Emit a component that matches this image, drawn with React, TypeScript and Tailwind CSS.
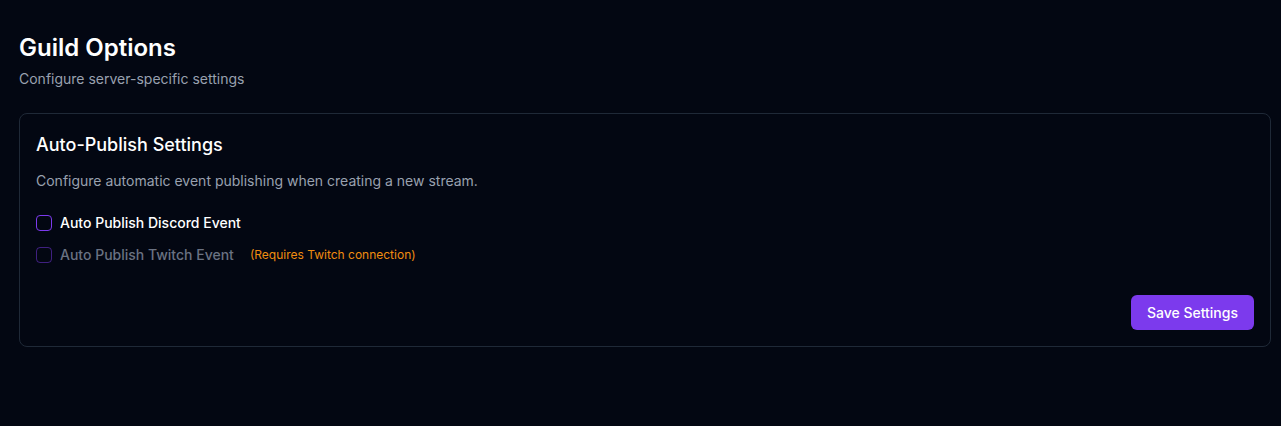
import { useState } from "react";

export default function App() {
  const [discord, setDiscord] = useState(false);

  return (
    <div
      className="min-h-[426px] bg-[#030712] pl-[19px] pr-[10px] pt-8 text-white"
      style={{ fontFamily: "Inter, 'Noto Sans', sans-serif" }}
    >
      <h1 className="text-2xl font-semibold leading-8 text-white">Guild Options</h1>
      <p className="mt-[5px] text-sm leading-5 text-gray-400">
        Configure server-specific settings
      </p>

      <div className="mt-[24px] rounded-lg border border-[#1f2937] px-4 pt-4 pb-4">
        <h2 className="mt-px text-lg font-medium leading-7 text-white">
          Auto-Publish Settings
        </h2>
        <p className="mt-3 text-sm leading-5 text-gray-400">
          Configure automatic event publishing when creating a new stream.
        </p>

        <div className="mt-[22px] flex flex-col gap-3">
          <label className="flex h-5 items-center gap-2 cursor-pointer">
            <input
              type="checkbox"
              checked={discord}
              onChange={(e) => setDiscord(e.target.checked)}
              className="h-4 w-4 appearance-none rounded border border-[#7c3aed] bg-transparent checked:bg-[#7c3aed]"
            />
            <span className="text-sm font-medium text-white">
              Auto Publish Discord Event
            </span>
          </label>
          <label className="flex h-5 items-center gap-2 cursor-not-allowed">
            <input
              type="checkbox"
              disabled
              className="h-4 w-4 appearance-none rounded border border-[#7c3aed]/50 bg-transparent"
            />
            <span className="text-sm font-medium text-gray-500">
              Auto Publish Twitch Event
            </span>
            <span className="ml-2 text-xs text-[#f08c10]">
              (Requires Twitch connection)
            </span>
          </label>
        </div>

        <div className="mt-[30px] flex justify-end">
          <button className="h-[35px] rounded-md bg-[#7c3aed] px-4 text-sm font-medium text-white hover:bg-[#6d28d9]">
            Save Settings
          </button>
        </div>
      </div>
    </div>
  );
}
